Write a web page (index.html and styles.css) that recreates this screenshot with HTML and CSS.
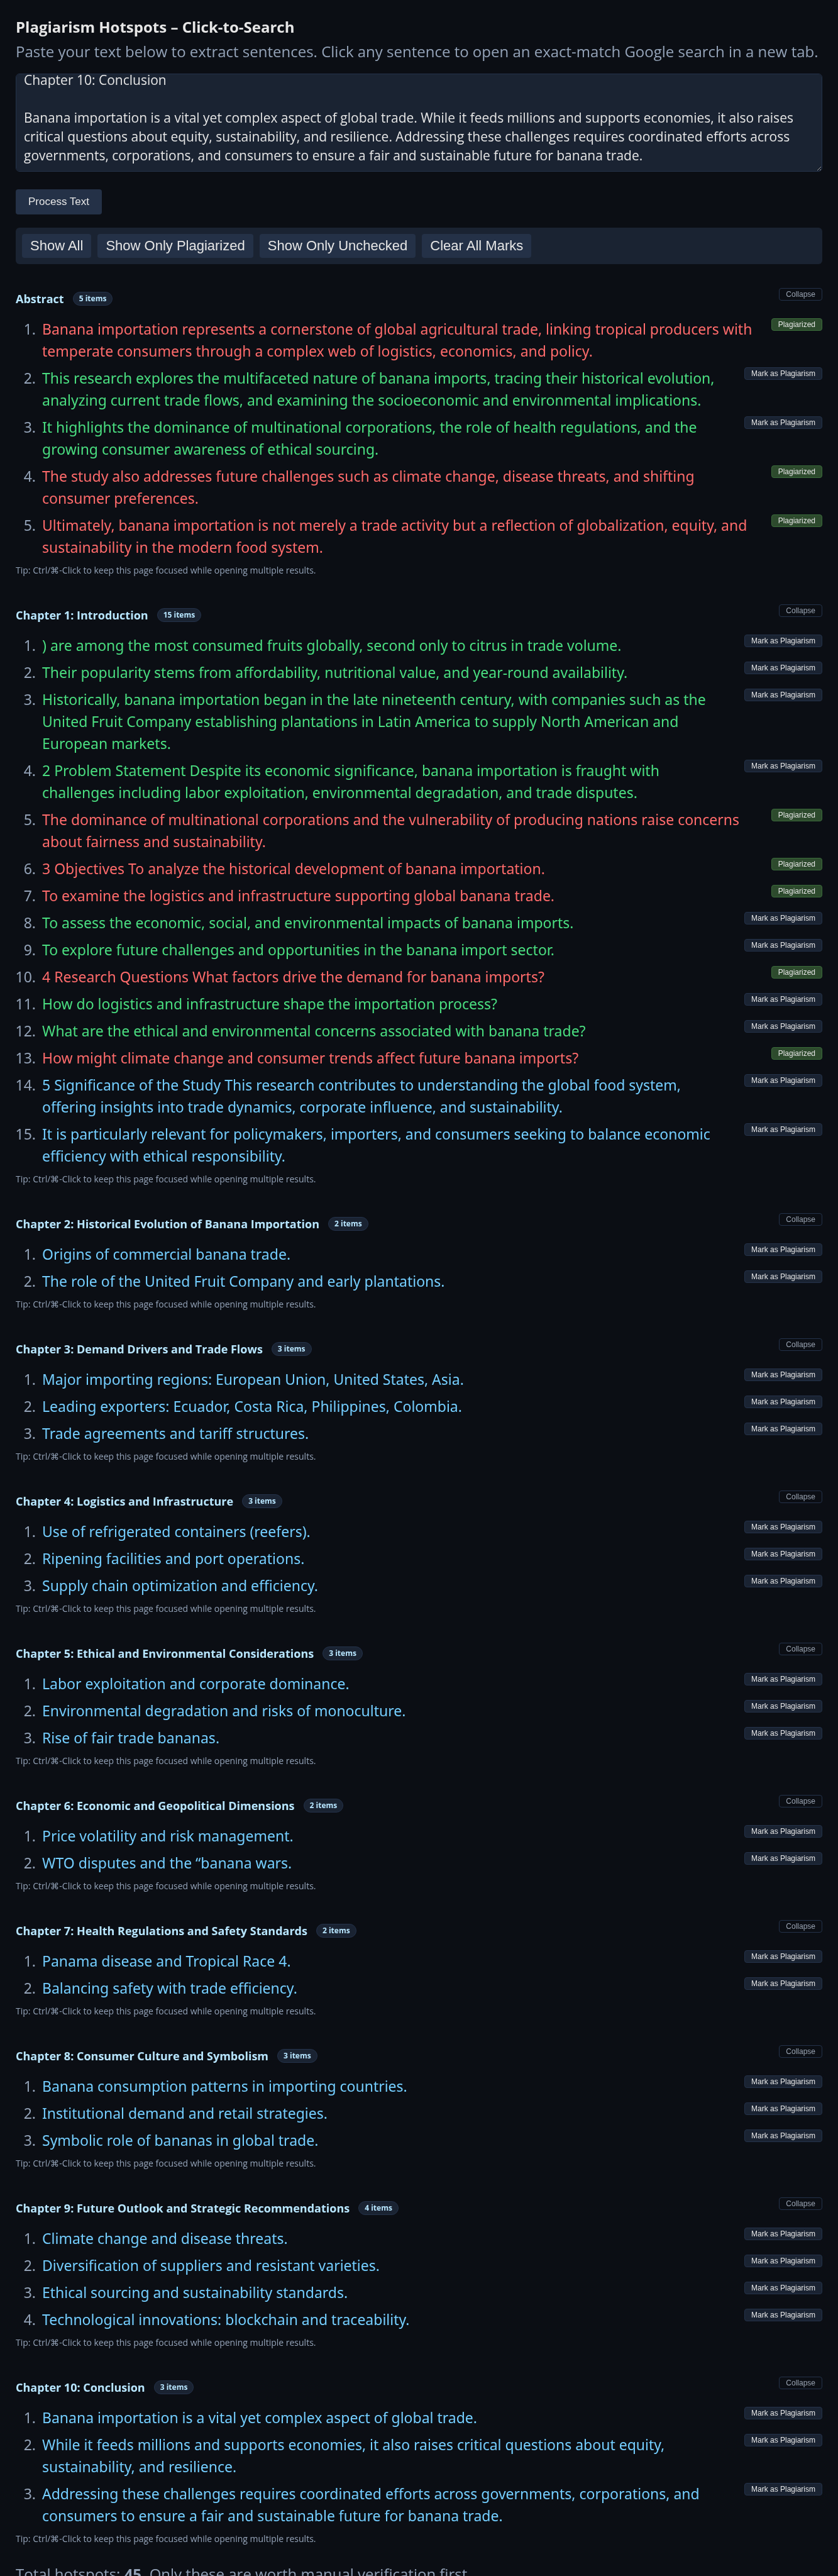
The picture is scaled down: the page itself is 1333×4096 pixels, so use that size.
FILE: index.html
```html
<!DOCTYPE html>
<html lang="en">
<head>
<meta charset="utf-8">
<title>Plagiarism Hotspots</title>
<link rel="stylesheet" href="styles.css">
</head>
<body>
<header class="page-header">
<h1 class="page-title">Plagiarism Hotspots – Click-to-Search</h1>
<p class="intro"><label for="source">Paste your text below to extract sentences. Click any sentence to open an exact-match Google search in a new tab.</label></p>
</header>
<textarea class="source" id="source">Chapter 10: Conclusion

Banana importation is a vital yet complex aspect of global trade. While it feeds millions and supports economies, it also raises critical questions about equity, sustainability, and resilience. Addressing these challenges requires coordinated efforts across governments, corporations, and consumers to ensure a fair and sustainable future for banana trade.</textarea>
<button class="process" type="button">Process Text</button>
<div class="toolbar">
<button class="filter" type="button">Show All</button>
<button class="filter" type="button">Show Only Plagiarized</button>
<button class="filter" type="button">Show Only Unchecked</button>
<button class="filter" type="button">Clear All Marks</button>
</div>
<main class="sections" id="sections"></main>
<p class="summary">Total hotspots: <strong>45</strong>. Only these are worth manual verification first.</p>
<script src="app.js"></script>
</body>
</html>
```
FILE: styles.css
```css
* { box-sizing: border-box; }
body {
  margin: 0;
  padding: 25px 25px 0;
  background: #0b0e14;
  color: #e6e6e6;
  font-family: "Noto Sans", "Open Sans", sans-serif;
  font-size: 23px;
  line-height: 35px;
}
.page-title { margin: 0 0 4px; font: bold 24px/35px "Open Sans", "Noto Sans", sans-serif; }
.intro { margin: 0 0 18px; font-size: 24px; font-family: "Open Sans", "Noto Sans", sans-serif; color: #94a3b8; }
.source {
  display: block;
  width: 100%;
  height: 156px;
  padding: 10px 12px;
  border: 1px solid #24324a;
  border-radius: 6px;
  background: #1a2332;
  color: #e6e6e6;
  font: 21px/30px "Open Sans", "Noto Sans", sans-serif;
  resize: vertical;
  scrollbar-width: none;
}
button { font-family: "Liberation Sans", sans-serif; color: #e6e6e6; cursor: pointer; }
.process {
  display: block;
  margin-top: 28px;
  padding: 0 20px;
  height: 40px;
  border: 0;
  border-radius: 4px;
  background: #243147;
  font-size: 17px;
}
.toolbar {
  display: flex;
  flex-wrap: wrap;
  gap: 10px;
  margin-top: 21px;
  padding: 10px;
  border-radius: 6px;
  background: #1a2332;
}
.filter {
  height: 38px;
  padding: 0 13px;
  border: 0;
  border-radius: 4px;
  background: #243147;
  font-size: 22px;
}
.sections { display: flex; flex-direction: column; gap: 43px; margin-top: 38px; }
.section-head { display: flex; justify-content: space-between; align-items: flex-start; }
.section-title {
  display: flex;
  align-items: center;
  gap: 14px;
  margin: 5px 0 0;
  font: bold 18px/24px "Open Sans", "Noto Sans", sans-serif;
  color: #b8e6ff;
}
.count {
  padding: 0 9px;
  border: 1px solid #24324a;
  border-radius: 12px;
  background: #1a2332;
  font-size: 12px;
  line-height: 20px;
}
.small {
  flex: none;
  height: 20px;
  padding: 0 10px;
  border: 1px solid #24324a;
  border-radius: 4px;
  background: #1a2332;
  font-size: 12px;
  line-height: 16px;
}
.collapse { background: transparent; color: #9aa4b2; }
.items { margin: 19px 0 0; padding-left: 38px; color: #94a3b8; }
.item { margin-bottom: 8px; padding-left: 4px; }
.row { display: flex; justify-content: space-between; align-items: flex-start; gap: 16px; }
.sentence { color: #74ceff; text-decoration: none; }
.visited .sentence { color: #4ade80; }
.marked .sentence { color: #ff6b6b; }
.marked .small { background: #2d4a2d; border-color: #3a6b3a; }
.tip { margin: 0; font: 14px/22px "Open Sans", "Noto Sans", sans-serif; color: #94a3b8; }
.summary { margin: 27px 0 0; font-size: 24px; font-family: "Open Sans", "Noto Sans", sans-serif; color: #94a3b8; }
```
FILE: app.js
```js
// state: p = marked as plagiarism, v = already searched, n = not opened yet
const sections = [
  ["Abstract", [
    ["p", "Banana importation represents a cornerstone of global agricultural trade, linking tropical producers with temperate consumers through a complex web of logistics, economics, and policy."],
    ["v", "This research explores the multifaceted nature of banana imports, tracing their historical evolution, analyzing current trade flows, and examining the socioeconomic and environmental implications."],
    ["v", "It highlights the dominance of multinational corporations, the role of health regulations, and the growing consumer awareness of ethical sourcing."],
    ["p", "The study also addresses future challenges such as climate change, disease threats, and shifting consumer preferences."],
    ["p", "Ultimately, banana importation is not merely a trade activity but a reflection of globalization, equity, and sustainability in the modern food system."]]],
  ["Chapter 1: Introduction", [
    ["v", ") are among the most consumed fruits globally, second only to citrus in trade volume."],
    ["v", "Their popularity stems from affordability, nutritional value, and year-round availability."],
    ["v", "Historically, banana importation began in the late nineteenth century, with companies such as the United Fruit Company establishing plantations in Latin America to supply North American and European markets."],
    ["v", "2 Problem Statement Despite its economic significance, banana importation is fraught with challenges including labor exploitation, environmental degradation, and trade disputes."],
    ["p", "The dominance of multinational corporations and the vulnerability of producing nations raise concerns about fairness and sustainability."],
    ["p", "3 Objectives To analyze the historical development of banana importation."],
    ["p", "To examine the logistics and infrastructure supporting global banana trade."],
    ["v", "To assess the economic, social, and environmental impacts of banana imports."],
    ["v", "To explore future challenges and opportunities in the banana import sector."],
    ["p", "4 Research Questions What factors drive the demand for banana imports?"],
    ["v", "How do logistics and infrastructure shape the importation process?"],
    ["v", "What are the ethical and environmental concerns associated with banana trade?"],
    ["p", "How might climate change and consumer trends affect future banana imports?"],
    ["n", "5 Significance of the Study This research contributes to understanding the global food system, offering insights into trade dynamics, corporate influence, and sustainability."],
    ["n", "It is particularly relevant for policymakers, importers, and consumers seeking to balance economic efficiency with ethical responsibility."]]],
  ["Chapter 2: Historical Evolution of Banana Importation", [
    ["n", "Origins of commercial banana trade."],
    ["n", "The role of the United Fruit Company and early plantations."]]],
  ["Chapter 3: Demand Drivers and Trade Flows", [
    ["n", "Major importing regions: European Union, United States, Asia."],
    ["n", "Leading exporters: Ecuador, Costa Rica, Philippines, Colombia."],
    ["n", "Trade agreements and tariff structures."]]],
  ["Chapter 4: Logistics and Infrastructure", [
    ["n", "Use of refrigerated containers (reefers)."],
    ["n", "Ripening facilities and port operations."],
    ["n", "Supply chain optimization and efficiency."]]],
  ["Chapter 5: Ethical and Environmental Considerations", [
    ["n", "Labor exploitation and corporate dominance."],
    ["n", "Environmental degradation and risks of monoculture."],
    ["n", "Rise of fair trade bananas."]]],
  ["Chapter 6: Economic and Geopolitical Dimensions", [
    ["n", "Price volatility and risk management."],
    ["n", "WTO disputes and the “banana wars."]]],
  ["Chapter 7: Health Regulations and Safety Standards", [
    ["n", "Panama disease and Tropical Race 4."],
    ["n", "Balancing safety with trade efficiency."]]],
  ["Chapter 8: Consumer Culture and Symbolism", [
    ["n", "Banana consumption patterns in importing countries."],
    ["n", "Institutional demand and retail strategies."],
    ["n", "Symbolic role of bananas in global trade."]]],
  ["Chapter 9: Future Outlook and Strategic Recommendations", [
    ["n", "Climate change and disease threats."],
    ["n", "Diversification of suppliers and resistant varieties."],
    ["n", "Ethical sourcing and sustainability standards."],
    ["n", "Technological innovations: blockchain and traceability."]]],
  ["Chapter 10: Conclusion", [
    ["n", "Banana importation is a vital yet complex aspect of global trade."],
    ["n", "While it feeds millions and supports economies, it also raises critical questions about equity, sustainability, and resilience."],
    ["n", "Addressing these challenges requires coordinated efforts across governments, corporations, and consumers to ensure a fair and sustainable future for banana trade."]]]
];
const classes = { p: "item marked", v: "item visited", n: "item" };
document.getElementById("sections").innerHTML = sections.map(([title, items]) => `
<section class="section">
<div class="section-head">
<h2 class="section-title">${title}<span class="count">${items.length} items</span></h2>
<button class="small collapse" type="button">Collapse</button>
</div>
<ol class="items">${items.map(([state, text]) => `
<li class="${classes[state]}"><div class="row">
<a class="sentence" href="https://www.google.com/search?q=${encodeURIComponent('"' + text + '"')}" target="_blank">${text}</a>
<button class="small" type="button">${state === "p" ? "Plagiarized" : "Mark as Plagiarism"}</button>
</div></li>`).join("")}
</ol>
<p class="tip">Tip: Ctrl/⌘-Click to keep this page focused while opening multiple results.</p>
</section>`).join("");

// keep the end of the pasted text in view
const source = document.getElementById("source");
source.scrollTop = source.scrollHeight;
```
